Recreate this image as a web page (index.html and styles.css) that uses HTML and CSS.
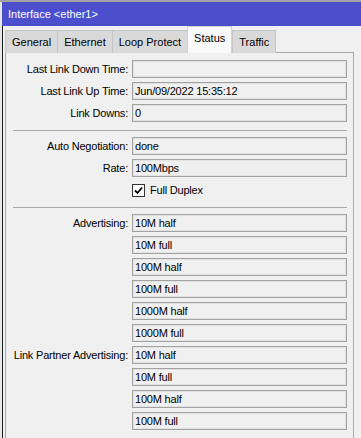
FILE: index.html
```html
<!DOCTYPE html>
<html lang="en">
	<head>
		<meta charset="UTF-8" />
		<meta name="viewport" content="width=device-width, initial-scale=1.0" />
		<title>Interface &lt;ether1&gt;</title>
		<link rel="stylesheet" href="styles.css">
	</head>
	<body>
		<div class="screen">
			<div class="behind"></div>
			<div class="window">
				<div class="titlebar">Interface &lt;ether1&gt;</div>
				<div class="frame">
					<div class="tabs">
						<div class="tab">General</div>
						<div class="tab">Ethernet</div>
						<div class="tab">Loop Protect</div>
						<div class="tab active">Status</div>
						<div class="tab">Traffic</div>
					</div>
					<div class="pane">
						<div class="form">
							<div class="label">Last Link Down Time:</div>
							<div class="field"></div>
							<div class="label">Last Link Up Time:</div>
							<div class="field">Jun/09/2022 15:35:12</div>
							<div class="label">Link Downs:</div>
							<div class="field">0</div>
						</div>

						<div class="separator"></div>

						<div class="form">
							<div class="label">Auto Negotiation:</div>
							<div class="field">done</div>
							<div class="label">Rate:</div>
							<div class="field">100Mbps</div>
							<div class="label"></div>
							<div class="check-row">
								<span class="checkbox">
									<svg width="9" height="9" viewBox="0 0 9 9">
										<path d="M1 4.5 L3.5 7 L8 1.5" fill="none" stroke="#000" stroke-width="1.8" />
									</svg>
								</span>
								<span>Full Duplex</span>
							</div>
						</div>

						<div class="separator"></div>

						<div class="form">
							<div class="label">Advertising:</div>
							<div class="field">10M half</div>
							<div class="label"></div>
							<div class="field">10M full</div>
							<div class="label"></div>
							<div class="field">100M half</div>
							<div class="label"></div>
							<div class="field">100M full</div>
							<div class="label"></div>
							<div class="field">1000M half</div>
							<div class="label"></div>
							<div class="field">1000M full</div>

							<div class="label">Link Partner Advertising:</div>
							<div class="field">10M half</div>
							<div class="label"></div>
							<div class="field">10M full</div>
							<div class="label"></div>
							<div class="field">100M half</div>
							<div class="label"></div>
							<div class="field">100M full</div>
						</div>
					</div>
				</div>
			</div>
		</div>
	</body>
</html>
```

FILE: styles.css
```css
body {
	margin: 0;
	background-color: #f0f0f0;
	font-family: "Liberation Sans", Arial, sans-serif;
	font-size: 11px;
	color: #000;
	overflow: hidden;
}

.screen {
	display: flex;
	height: 436px;
	border-top: 2px solid #a3a3a3;
}

.behind {
	width: 2px;
	background-color: #e8e8e8;
}

.window {
	flex: 1;
	display: flex;
	flex-direction: column;
}

.titlebar {
	height: 24px;
	line-height: 24px;
	background-color: #4b4fcd;
	color: #fff;
	font-size: 11px;
	padding-left: 6px;
}

.frame {
	flex: 1;
	display: flex;
	flex-direction: column;
	border-left: 1px solid #1a1a1a;
	padding: 1px 7px 0 2px;
}

.tabs {
	display: flex;
	align-items: flex-end;
	height: 26px;
	position: relative;
	z-index: 1;
	margin-bottom: -1px;
}

.tab {
	height: 22px;
	line-height: 23px;
	padding: 0 6px;
	background-color: #d9d9d9;
	border: 1px solid #c6c6c6;
	border-bottom: none;
	margin-right: -1px;
}

.tab.active {
	height: 26px;
	line-height: 23px;
	background-color: #f9f9f9;
	border-color: #d2d2d2;
	padding: 0 6px;
	position: relative;
	z-index: 2;
	margin-right: 0;
}

.pane {
	flex: 1;
	border: 1px solid #a9a9a9;
	border-bottom: none;
	padding: 7px 6px 0 0;
	letter-spacing: -0.2px;
}

.form {
	display: grid;
	grid-template-columns: 122px 1fr;
	column-gap: 4px;
	row-gap: 4px;
}

.label {
	height: 18px;
	line-height: 18px;
	text-align: right;
	white-space: nowrap;
}

.field {
	height: 16px;
	line-height: 16px;
	border: 1px solid #a2a2a2;
	box-shadow: inset 0 0 0 1px #e2e2e2;
	padding-left: 2px;
	white-space: nowrap;
}

.check-row {
	height: 18px;
	display: flex;
	align-items: center;
	gap: 5px;
}

.checkbox {
	width: 11px;
	height: 11px;
	border: 1px solid #333;
	background-color: #fff;
	display: flex;
	align-items: center;
	justify-content: center;
}

.separator {
	height: 1px;
	background-color: #a9a9a9;
	margin: 8px 0 6px 7px;
}
```
